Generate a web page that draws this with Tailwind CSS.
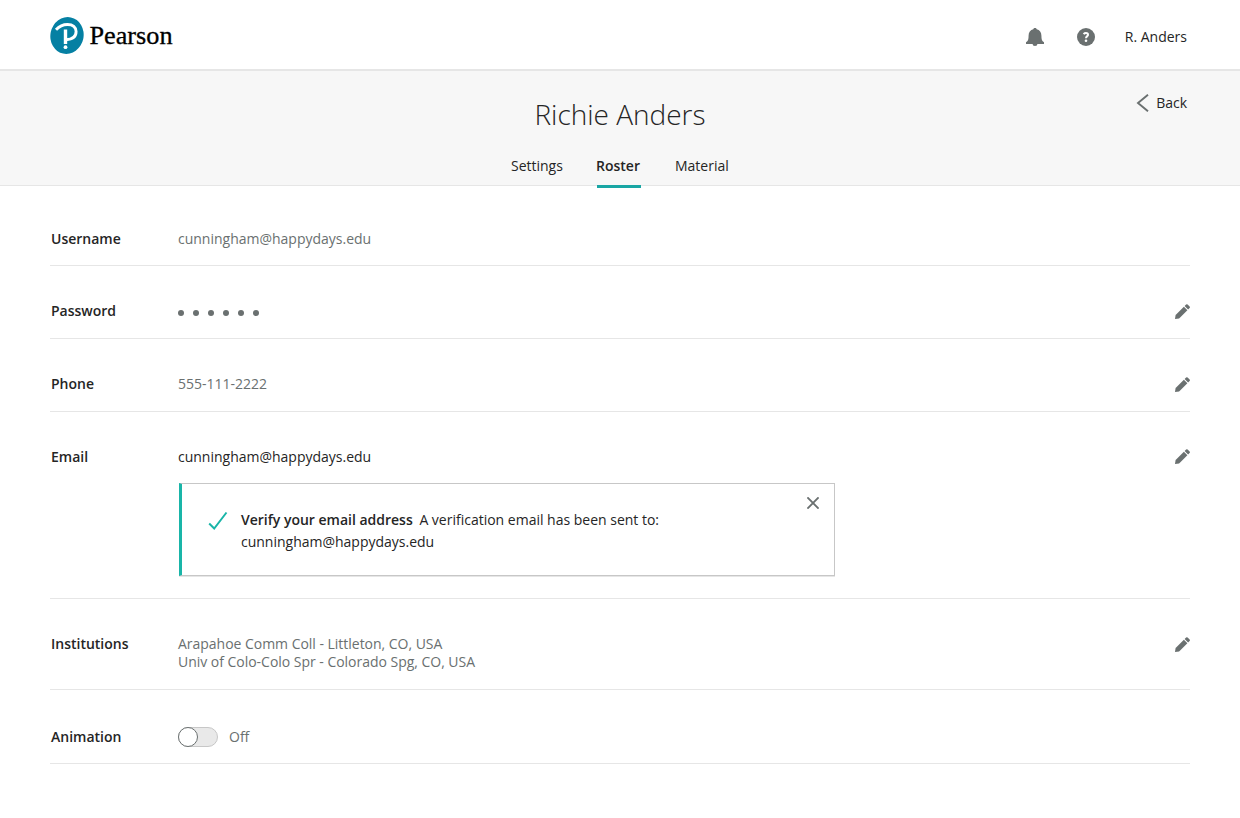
<!DOCTYPE html>
<html lang="en">
<head>
<meta charset="utf-8">
<title>Richie Anders</title>
<script src="https://cdn.jsdelivr.net/npm/@tailwindcss/browser@4"></script>
</head>
<body class="h-[818px] overflow-hidden bg-white font-['Open_Sans',sans-serif] text-[14px] leading-[18px] tracking-[-0.005px] text-[#252525]">
<svg class="hidden"><symbol id="pencil" viewBox="0 0 15 15"><path d="M0 15 .6 11 8.900 2.700l3.500 3.500L4.100 14.400z"/><path d="M9.600 2 11.100.5q.8-.7 1.500 0l2 2q.7.700 0 1.500l-1.500 1.500z"/></symbol></svg>
<header class="flex h-[71px] items-start justify-between border-b-2 border-[#e6e6e6] pl-[50px] pr-[53px]">
  <div class="flex pt-[17px]">
    <svg class="h-[37px] w-[34px]" viewBox="0 0 34 37"><ellipse cx="17" cy="18.500" rx="16.600" ry="18.500" transform="rotate(12 17 18.500)" fill="#0580a3"/><g fill="none" stroke="#fff"><path d="M6 12.800C9.200 9.300 13 7.500 17.500 7.500c5.300 0 8.600 2.700 8.600 7.100 0 4.900-3.700 7.900-10.100 8.100" stroke-width="2.900"/><path d="M15.500 12.500v14.500" stroke-width="3.400"/></g><circle cx="15.500" cy="30.200" r="1.900" fill="#fff"/></svg>
    <svg class="ml-[5px] h-[37px] w-[86px]" viewBox="0 0 86 37"><text x="0.500" y="26.700" textLength="83" lengthAdjust="spacingAndGlyphs" font-family="Liberation Serif, serif" font-size="25" fill="#000" stroke="#000" stroke-width=".3">Pearson</text></svg>
  </div>
  <div class="flex items-center pt-[28px]">
    <svg class="h-[18px] w-[18px]" viewBox="0 0 18 18" fill="#6a7070"><path d="M9 0c-.9 0-1.500.5-1.700 1.200C4.300 2 2.600 4.300 2.600 7.500c0 3.800-.5 5.700-2.600 6.700v1.700h18v-1.700c-2.100-1-2.600-2.900-2.600-6.700 0-3.200-1.700-5.500-4.700-6.300C10.500.5 9.900 0 9 0zM6.500 15.800a2.500 2.200 0 0 0 5 0z"/></svg>
    <svg class="ml-[33px] h-[18px] w-[18px]" viewBox="0 0 18 18"><circle cx="9" cy="9" r="9" fill="#6a7070"/><path d="M6.600 6.200C7.200 5.500 8 5.100 9 5.100c1.300 0 2 .6 2 1.600 0 1.500-2 1.600-2 3.500" fill="none" stroke="#fff" stroke-width="2"/><circle cx="9" cy="12.800" r="1.300" fill="#fff"/></svg>
    <span class="ml-[30px]">R. Anders</span>
  </div>
</header>
<section class="relative h-[115px] border-b border-[#e6e6e6] bg-[#f7f7f7]">
  <h1 class="pt-[23px] text-center text-[28px] font-light leading-[40px]">Richie Anders</h1>
  <nav class="flex justify-start pl-[511px] pt-[23px]">
    <a class="w-[85px]">Settings</a>
    <a class="w-[79px] font-semibold">Roster</a>
    <a>Material</a>
  </nav>
  <div class="absolute left-[597px] top-[114px] h-[3px] w-[44px] bg-[#19a6a4]"></div>
  <a class="absolute right-[53px] top-[23px] flex items-center"><svg class="mr-[7px] h-[18px] w-[13px]" viewBox="0 0 13 18" fill="none" stroke="#6a7070" stroke-width="1.900"><path d="M12 .7 2 9l10 8.300"/></svg>Back</a>
</section>
<main class="mx-[50px]">
  <div class="flex h-[80px] border-b border-[#e6e6e6] pl-px pt-[44px]">
    <div class="w-[127px] font-semibold">Username</div><div class="flex-1 text-[#6a7070]">cunningham@happydays.edu</div>
  </div>
  <div class="flex h-[73px] border-b border-[#e6e6e6] pl-px pt-[36px]">
    <div class="w-[127px] font-semibold">Password</div>
    <div class="flex flex-1 gap-[9px] pt-[8px]"><i class="size-[6px] rounded-full bg-[#6a7070]"></i><i class="size-[6px] rounded-full bg-[#6a7070]"></i><i class="size-[6px] rounded-full bg-[#6a7070]"></i><i class="size-[6px] rounded-full bg-[#6a7070]"></i><i class="size-[6px] rounded-full bg-[#6a7070]"></i><i class="size-[6px] rounded-full bg-[#6a7070]"></i></div>
    <svg class="mt-[2px] size-[15px]" fill="#6a7070"><use href="#pencil"/></svg>
  </div>
  <div class="flex h-[73px] border-b border-[#e6e6e6] pl-px pt-[36px]">
    <div class="w-[127px] font-semibold">Phone</div><div class="flex-1 text-[#6a7070]">555-111-2222</div>
    <svg class="mt-[2px] size-[15px]" fill="#6a7070"><use href="#pencil"/></svg>
  </div>
  <div class="flex h-[187px] border-b border-[#e6e6e6] pl-px pt-[36px]">
    <div class="w-[127px] font-semibold">Email</div>
    <div class="flex-1">
      <div>cunningham@happydays.edu</div>
      <div class="ml-px mt-[17px] flex h-[93px] w-[656px] border border-l-[3px] border-[#c7c7c7] border-l-[#19b5a8] shadow-[0_1px_0_#e6e6e6]">
        <svg class="ml-[26px] mt-[27px] h-[20px] w-[20px]" viewBox="0 0 20 20" fill="none" stroke="#19b5a8" stroke-width="2"><path d="M1.200 12.500 6.200 17.500 18.500 1.500"/></svg>
        <p class="ml-[13px] mt-[25px] flex-1 leading-[22px]"><b class="mr-[6.700px] font-semibold">Verify your email address</b>A verification email has been sent to:<br>cunningham@happydays.edu</p>
        <svg class="mr-[15px] mt-[13px] h-[12px] w-[12px]" viewBox="0 0 12 12" stroke="#6a7070" stroke-width="1.900"><path d="M.4.4l11.200 11.200M11.600.4.4 11.600"/></svg>
      </div>
    </div>
    <svg class="mt-px size-[15px]" fill="#6a7070"><use href="#pencil"/></svg>
  </div>
  <div class="flex h-[91px] border-b border-[#e6e6e6] pl-px pt-[36px]">
    <div class="w-[127px] font-semibold">Institutions</div><div class="flex-1 tracking-[-0.025px] text-[#6a7070]">Arapahoe Comm Coll - Littleton, CO, USA<br>Univ of Colo-Colo Spr - Colorado Spg, CO, USA</div>
    <svg class="mt-[2px] size-[15px]" fill="#6a7070"><use href="#pencil"/></svg>
  </div>
  <div class="flex h-[74px] border-b border-[#e6e6e6] pl-px pt-[38px]">
    <div class="w-[127px] font-semibold">Animation</div>
    <div class="-mt-px flex h-[20px] w-[40px] rounded-full border border-[#c7c7c7] bg-[#e9e9e9]"><div class="-ml-px -mt-px size-[20px] rounded-full border border-[#6a7070] bg-white"></div></div>
    <div class="ml-[11px] text-[#6a7070]">Off</div>
  </div>
</main>
</body>
</html>
